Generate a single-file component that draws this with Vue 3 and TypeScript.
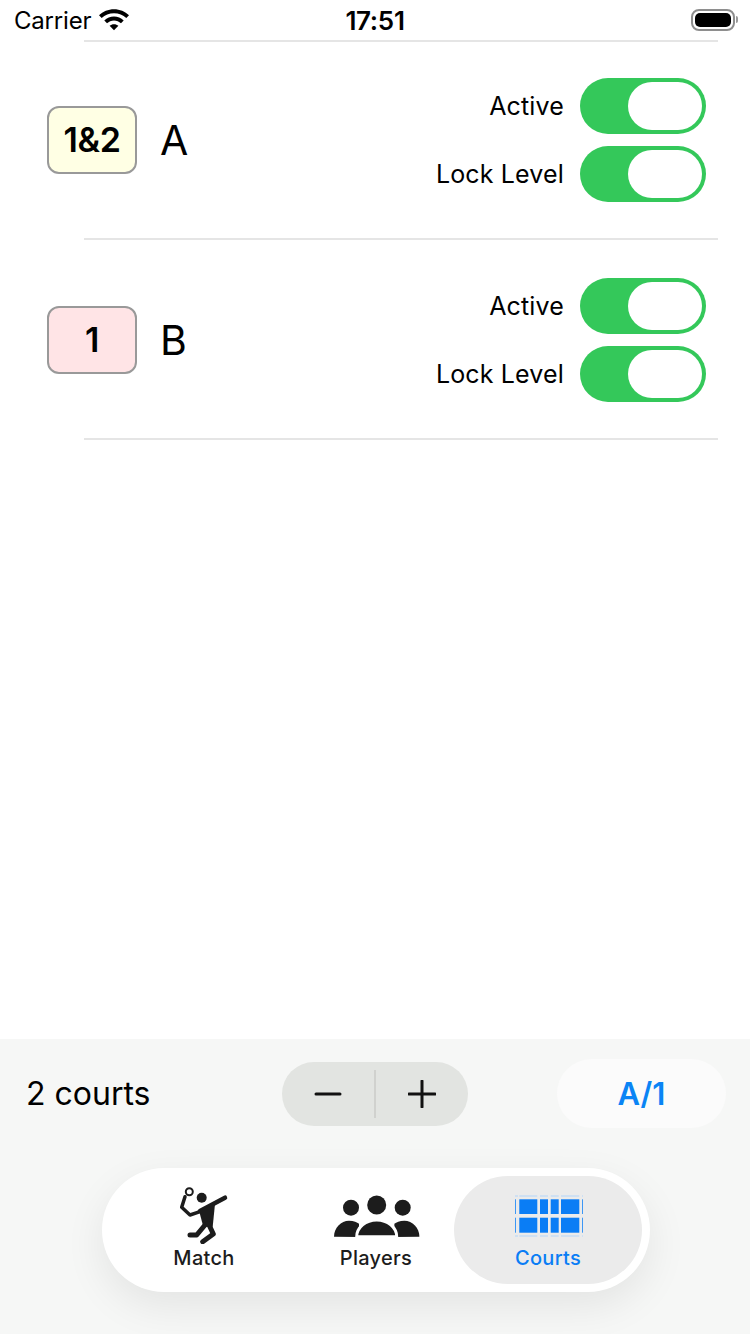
<script setup lang="ts">
const courts = [
  { name: "A", level: "1&2", tone: "yellow" },
  { name: "B", level: "1", tone: "pink" },
];
const switches = ["Active", "Lock Level"];
</script>

<template>
  <div class="page">
    <div class="status">
      <div class="status-left">
        <span class="carrier">Carrier</span>
        <svg class="wifi" width="32" height="24" viewBox="0 0 32 24">
          <path d="M1 8.200C4.900 4.500 10.200 2.200 16 2.200s11.100 2.300 15 6l-2.700 2.800C25.100 8 20.800 6.200 16 6.200S6.900 8 3.700 11z" fill="#000" />
          <path d="M6.300 13.500C9 11 12.300 9.500 16 9.500s7 1.500 9.700 4L23 16.300c-1.900-1.700-4.300-2.800-7-2.800s-5.100 1.100-7 2.800z" fill="#000" />
          <path d="M11.600 18.800c1.200-1 2.700-1.600 4.400-1.600s3.200.6 4.400 1.600L16 23.300z" fill="#000" />
        </svg>
      </div>
      <span class="time">17:51</span>
      <div class="battery">
        <div class="battery-body"><div class="battery-fill"></div></div>
        <div class="battery-cap"></div>
      </div>
    </div>

    <div class="list">
      <div class="rule first"></div>
      <template v-for="court in courts" :key="court.name">
        <div class="court">
          <div class="badge" :class="court.tone">{{ court.level }}</div>
          <span class="court-name">{{ court.name }}</span>
          <div class="switches">
            <div v-for="label in switches" :key="label" class="switch-row">
              <span class="switch-label">{{ label }}</span>
              <div class="toggle"><div class="knob"></div></div>
            </div>
          </div>
        </div>
        <div class="rule"></div>
      </template>
    </div>

    <div class="bottom">
      <div class="controls">
        <span class="count">2 courts</span>
        <div class="stepper">
          <button class="step">
            <svg width="28" height="28" viewBox="0 0 28 28"><path d="M2 14h24" stroke="#111" stroke-width="3" stroke-linecap="round" /></svg>
          </button>
          <div class="step-line"></div>
          <button class="step">
            <svg width="28" height="28" viewBox="0 0 28 28"><path d="M1 14h26M14 1v26" stroke="#111" stroke-width="3" stroke-linecap="round" /></svg>
          </button>
        </div>
        <button class="current">A/1</button>
      </div>

      <div class="tabs">
        <div class="tab">
          <svg class="tab-icon" width="60" height="60" viewBox="0 0 60 60">
            <circle cx="15.300" cy="7.700" r="3.500" fill="none" stroke="#1c1c1c" stroke-width="2" />
            <circle cx="27.700" cy="13.700" r="5" fill="#1c1c1c" />
            <path d="M11 12.700 7.700 23.300 16 31l10-3.300" fill="none" stroke="#1c1c1c" stroke-width="3.500" stroke-linecap="round" stroke-linejoin="round" />
            <path d="M26 27 51 13.700" fill="none" stroke="#1c1c1c" stroke-width="4.500" stroke-linecap="round" />
            <path d="M25 26.500 41 20l-2.300 22.700h-9.400z" fill="#1c1c1c" />
            <path d="M31 41 22.700 51H16" fill="none" stroke="#1c1c1c" stroke-width="5" stroke-linecap="round" stroke-linejoin="round" />
            <path d="M34.300 39.300 39.300 50l-10.600 7.700" fill="none" stroke="#1c1c1c" stroke-width="5" stroke-linecap="round" stroke-linejoin="round" />
          </svg>
          <span class="tab-label">Match</span>
        </div>
        <div class="tab">
          <svg class="tab-icon" width="88" height="60" viewBox="0 0 88 60">
            <circle cx="19" cy="23.700" r="8" fill="#1c1c1c" />
            <circle cx="44.700" cy="21" r="9.500" fill="#1c1c1c" />
            <circle cx="70.700" cy="23.700" r="8" fill="#1c1c1c" />
            <path d="M2 52.700c0-9 7-16 15-16 5 0 8 1.500 10 3v13.200z" fill="#1c1c1c" />
            <path d="M87.400 52.700c0-9-7-16-15-16-5 0-8 1.500-10 3v13.200z" fill="#1c1c1c" />
            <path d="M24.700 52.700c0-9 9-16.700 20-16.700s20 7.700 20 16.700z" fill="#1c1c1c" stroke="#fff" stroke-width="3" />
          </svg>
          <span class="tab-label">Players</span>
        </div>
        <div class="tab selected">
          <svg class="tab-icon" width="70" height="60" viewBox="0 0 70 60">
            <path d="M2 12h3M6.300 12h18M27 12h8M37.700 12h8M48 12h18.300M69 12h1M2 52h3M6.300 52h18M27 52h8M37.700 52h8M48 52h18.300M69 52h1" stroke="#cfe0f2" stroke-width="2" />
            <path d="M2.500 15.300V30M2.500 33.700v15M69.500 15.300V30M69.500 33.700v15" stroke="#3d97f5" stroke-width="1" />
            <g fill="#0a7df5">
              <rect x="6.300" y="15.300" width="18" height="14.700" />
              <rect x="27" y="15.300" width="8" height="14.700" />
              <rect x="37.700" y="15.300" width="8" height="14.700" />
              <rect x="48" y="15.300" width="18.300" height="14.700" />
              <rect x="6.300" y="33.700" width="18" height="15" />
              <rect x="27" y="33.700" width="8" height="15" />
              <rect x="37.700" y="33.700" width="8" height="15" />
              <rect x="48" y="33.700" width="18.300" height="15" />
            </g>
          </svg>
          <span class="tab-label">Courts</span>
        </div>
      </div>
    </div>
  </div>
</template>

<style scoped>
.page {
  width: 750px;
  height: 1334px;
  display: flex;
  flex-direction: column;
  overflow: hidden;
  background: #fff;
  color: #000;
  font-family: Inter, "Liberation Sans", sans-serif;
}

.status {
  height: 40px;
  flex: none;
  display: grid;
  grid-template-columns: 1fr auto 1fr;
  align-items: center;
}

.status-left {
  display: flex;
  align-items: center;
  gap: 7px;
  margin-left: 14px;
}

.carrier {
  font-size: 24px;
  letter-spacing: -0.2px;
}

.wifi {
  margin-top: -3px;
}

.time {
  font-size: 26px;
  font-weight: 600;
  letter-spacing: -0.3px;
}

.battery {
  justify-self: end;
  display: flex;
  align-items: center;
  margin-right: 12px;
  margin-top: -1px;
}

.battery-body {
  width: 44px;
  height: 22px;
  box-sizing: border-box;
  border: 2px solid #8e8e8e;
  border-radius: 8px;
  padding: 2px;
}

.battery-fill {
  width: 100%;
  height: 100%;
  background: #000;
  border-radius: 5px;
}

.battery-cap {
  width: 2px;
  height: 7px;
  background: #9a9a9a;
  border-radius: 0 2px 2px 0;
  margin-left: 1px;
}

.list {
  flex: 1;
}

.rule {
  height: 2px;
  margin: 0 32px 2px 84px;
  background: #e5e5e5;
}

.rule.first {
  margin-bottom: 0;
}

.court {
  height: 196px;
  display: flex;
  align-items: center;
  padding: 0 44px 0 47px;
}

.badge {
  width: 90px;
  height: 68px;
  box-sizing: border-box;
  display: flex;
  align-items: center;
  justify-content: center;
  padding-bottom: 2px;
  border: 2px solid #999;
  border-radius: 12px;
  font-size: 34px;
  font-weight: 600;
  letter-spacing: -0.3px;
}

.badge.yellow {
  background: #ffffe4;
}

.badge.pink {
  background: #ffe4e6;
}

.court-name {
  margin-left: 23px;
  font-size: 41px;
}

.switches {
  margin-left: auto;
  display: flex;
  flex-direction: column;
  gap: 12px;
}

.switch-row {
  display: flex;
  align-items: center;
  justify-content: flex-end;
  gap: 16px;
}

.switch-label {
  font-size: 25px;
  letter-spacing: 0.15px;
}

.toggle {
  width: 126px;
  height: 56px;
  box-sizing: border-box;
  padding: 4px;
  display: flex;
  justify-content: flex-end;
  background: #34c85a;
  border-radius: 28px;
}

.knob {
  width: 74px;
  height: 48px;
  background: #fff;
  border-radius: 24px;
}

.bottom {
  height: 295px;
  flex: none;
  background: #f6f7f6;
  display: flex;
  flex-direction: column;
  align-items: center;
}

.controls {
  width: 100%;
  box-sizing: border-box;
  height: 129px;
  padding: 20px 24px 0 26px;
  display: flex;
  align-items: flex-start;
}

.count {
  width: 256px;
  line-height: 69px;
  font-size: 32px;
}

.stepper {
  width: 186px;
  height: 64px;
  margin-top: 3px;
  display: flex;
  align-items: center;
  background: #e2e4e1;
  border-radius: 32px;
}

.step {
  flex: 1;
  height: 100%;
  padding: 0;
  border: 0;
  background: none;
  display: flex;
  align-items: center;
  justify-content: center;
}

.step-line {
  width: 2px;
  height: 48px;
  background: #d0d1ce;
}

.current {
  width: 169px;
  height: 69px;
  margin-left: auto;
  padding: 0;
  border: 0;
  background: #fbfbfb;
  border-radius: 35px;
  color: #0a84f5;
  font-family: inherit;
  font-size: 31px;
  font-weight: 600;
}

.tabs {
  width: 548px;
  height: 124px;
  margin-left: 2px;
  box-sizing: border-box;
  padding: 8px;
  display: flex;
  background: #fff;
  border-radius: 62px;
  box-shadow: 0 14px 40px rgba(0, 0, 0, 0.08);
}

.tab {
  flex: 0 0 188px;
  display: flex;
  flex-direction: column;
  align-items: center;
  justify-content: flex-end;
  padding-bottom: 13px;
  border-radius: 54px;
  color: #1c1c1c;
}

.tab + .tab {
  margin-left: -16px;
}

.tab.selected {
  background: #ebebeb;
  color: #0a7df5;
}

.tab-icon {
  display: block;
  margin-bottom: 1px;
}

.tab-label {
  font-size: 20px;
  font-weight: 500;
  letter-spacing: 0.3px;
  line-height: 26px;
}
</style>
